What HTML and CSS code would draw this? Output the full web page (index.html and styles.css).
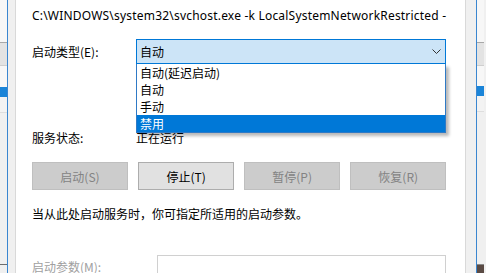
FILE: index.html
```html
<!DOCTYPE html>
<html lang="zh-CN">
<head>
<meta charset="utf-8">
<title>服务属性</title>
<link rel="stylesheet" href="styles.css">
</head>
<body>
<div class="desk">
  <div class="bgwin bgwin-left">
    <div class="bw-top"></div>
    <div class="bw-head"></div>
    <div class="bw-gap"></div>
    <div class="bw-sel"></div>
    <div class="bw-row"></div>
    <div class="bw-rest"></div>
    <div class="bw-foot"></div>
  </div>
  <div class="dialog">
    <div class="page">
      <div class="path">C:\WINDOWS\system32\svchost.exe -k LocalSystemNetworkRestricted -</div>

      <div class="row type-row">
        <div class="label">启动类型(E):</div>
        <div class="combo-wrap">
          <div class="combo">
            <span class="combo-text">自动</span>
            <svg class="chev" width="9" height="5" viewBox="0 0 9 5"><path d="M0.5 0.5 L4.5 4.5 L8.5 0.5" fill="none" stroke="#333" stroke-width="1"/></svg>
          </div>
          <ul class="droplist">
            <li class="opt">自动(延迟启动)</li>
            <li class="opt">自动</li>
            <li class="opt">手动</li>
            <li class="opt selected">禁用</li>
          </ul>
        </div>
      </div>

      <div class="sep"></div>

      <div class="row status-row">
        <div class="label">服务状态:</div>
        <div class="value">正在运行</div>
      </div>

      <div class="buttons">
        <button class="btn disabled">启动(S)</button>
        <button class="btn">停止(T)</button>
        <button class="btn disabled">暂停(P)</button>
        <button class="btn disabled">恢复(R)</button>
      </div>

      <div class="desc">当从此处启动服务时，你可指定所适用的启动参数。</div>

      <div class="row param-row">
        <div class="label grey">启动参数(M):</div>
        <div class="input"></div>
      </div>
    </div>
  </div>
  <div class="bgwin bgwin-right">
    <div class="bw-top r"></div>
    <div class="bw-head"></div>
    <div class="bw-gap r"></div>
    <div class="bw-sel"></div>
    <div class="bw-row"></div>
    <div class="bw-rest"></div>
    <div class="bw-foot dark"></div>
  </div>
</div>
</body>
</html>
```

FILE: styles.css
```css
html, body {
  margin: 0;
  padding: 0;
  background: #f0f0f0;
  overflow: hidden;
}

body {
  font-family: "Noto Sans CJK SC", "Noto Sans", sans-serif;
  font-size: 12px;
  color: #000;
}

.desk {
  display: flex;
  width: 486px;
  height: 273px;
  overflow: hidden;
}

/* background windows peeking out at the edges */
.bgwin {
  width: 7px;
  flex: none;
  display: flex;
  flex-direction: column;
  background: #f3f3f3;
}
.bw-top { height: 42px; background: #f7f7f7; border-bottom: 1px solid #a8a8a8; }
.bw-top.r { height: 42px; }
.bw-head { height: 22px; background: #e3e3e3; border-bottom: 1px solid #cfcfcf; }
.bw-gap { height: 21px; background: #f7f7f7; }
.bw-gap.r { height: 20px; }
.bw-sel { height: 10px; background: #1a84d8; }
.bw-row { height: 15px; background: #f3f3f3; border-bottom: 1px solid #dedede; }
.bw-rest { flex: 1; background: #f0f0f0; }
.bw-foot { height: 8px; border-top: 1px solid #6d6d6d; background: #f0f0f0; }
.bw-foot.dark { border-top: 1px solid #8a8a8a; background: #5a4a44; }

/* dialog frame */
.dialog {
  flex: none;
  width: 470px;
  box-sizing: border-box;
  border-left: 1px solid #3a86d0;
  border-right: 1px solid #3a86d0;
  background: #f0f0f0;
  padding: 0 10px 0 7px;
  display: flex;
}

.page {
  flex: 1;
  background: #fff;
  border-left: 1px solid #d9d9d9;
  border-right: 1px solid #d9d9d9;
  padding: 8px 19px 0 16px;
  display: flex;
  flex-direction: column;
}

.path {
  height: 16px;
  line-height: 16px;
  font-family: "Noto Sans", "Noto Sans CJK SC", sans-serif;
  white-space: nowrap;
  letter-spacing: 0.2px;
}

.row {
  display: flex;
  align-items: center;
}

.label {
  width: 104px;
  flex: none;
  white-space: nowrap;
}
.label.grey { color: #a0a0a0; width: 125px; }

.type-row {
  margin-top: 15px;
  height: 25px;
}

.combo-wrap {
  flex: 1;
  position: relative;
  height: 25px;
}

.combo {
  box-sizing: border-box;
  height: 25px;
  border: 1px solid #0078d7;
  background: #cce4f7;
  display: flex;
  align-items: center;
  justify-content: space-between;
  padding: 0 4px 0 3px;
}

.droplist {
  position: absolute;
  left: 0;
  right: 0;
  top: 25px;
  margin: 0;
  padding: 0;
  list-style: none;
  background: #fff;
  border: 1px solid #2f7ac6;
  border-top: none;
  box-shadow: 3px 3px 3px rgba(0,0,0,0.28);
  z-index: 5;
}
.opt {
  height: 17px;
  line-height: 17px;
  padding-left: 3px;
  white-space: nowrap;
}
.opt.selected {
  background: #0078d7;
  color: #fff;
}

.sep {
  margin-top: 51px;
  height: 1px;
  background: #a0a0a0;
}

.status-row {
  margin-top: 15px;
  height: 16px;
  line-height: 16px;
}

.buttons {
  margin-top: 16px;
  display: flex;
  justify-content: space-between;
}
.btn {
  width: 96px;
  height: 28px;
  box-sizing: border-box;
  border: 1px solid #adadad;
  background: #e1e1e1;
  color: #000;
  font-family: inherit;
  font-size: 12px;
  padding: 0;
}
.btn.disabled {
  background: #cccccc;
  border-color: #bfbfbf;
  color: #838383;
}

.desc {
  margin-top: 16px;
  height: 16px;
  line-height: 16px;
  white-space: nowrap;
}

.param-row {
  margin-top: 33px;
  height: 23px;
}
.input {
  flex: 1;
  height: 23px;
  box-sizing: border-box;
  border: 1px solid #d0d0d0;
  background: #fff;
}
```
